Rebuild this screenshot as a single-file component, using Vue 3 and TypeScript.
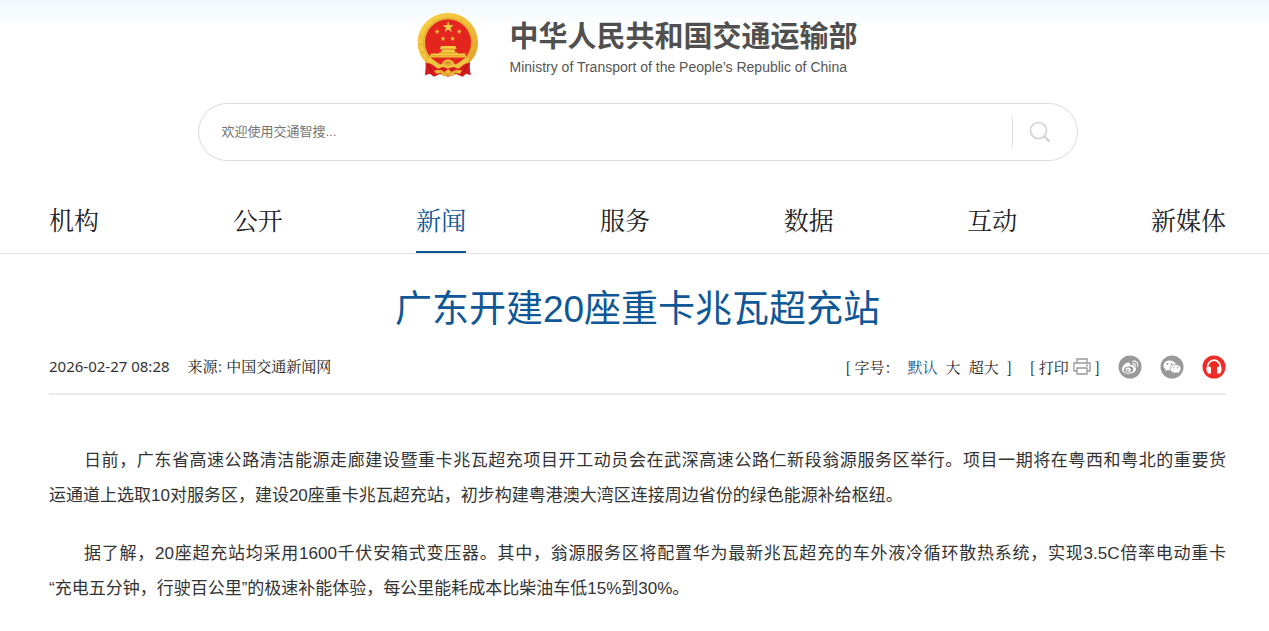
<script setup lang="ts">
import { ref } from 'vue'

const navItems: string[] = ['机构', '公开', '新闻', '服务', '数据', '互动', '新媒体']
const activeNav = ref('新闻')
const sizes: string[] = ['默认', '大', '超大']
const activeSize = ref('默认')
const query = ref('')

interface Paragraph {
  lead: string
  rest: string
}
const paragraphs: Paragraph[] = [
  {
    lead: '日前，广东省高速公路清洁能源走廊建设暨重卡兆瓦超充项目开工动员会在武深高速公路仁新段翁源服务区举行。项目一期将在粤西和粤北的重要货',
    rest: '运通道上选取10对服务区，建设20座重卡兆瓦超充站，初步构建粤港澳大湾区连接周边省份的绿色能源补给枢纽。',
  },
  {
    lead: '据了解，20座超充站均采用1600千伏安箱式变压器。其中，翁源服务区将配置华为最新兆瓦超充的车外液冷循环散热系统，实现3.5C倍率电动重卡',
    rest: '“充电五分钟，行驶百公里”的极速补能体验，每公里能耗成本比柴油车低15%到30%。',
  },
]
</script>

<template>
  <div class="page" lang="zh-CN">
    <header class="header">
      <a class="brand" href="#">
        <svg class="emblem" viewBox="21 21 188 198" aria-hidden="true">
          <defs>
            <linearGradient id="gold" x1="0" y1="0" x2="1" y2="1">
              <stop offset="0" stop-color="#f8d044" />
              <stop offset=".5" stop-color="#f3c13c" />
              <stop offset="1" stop-color="#dfa02c" />
            </linearGradient>
          </defs>
          <path d="M45 158C49 177 47 195 45 212L60 207L72 216L91 208L115 216L139 208L159 216L170 207L184 212C181 195 179 176 184 158Z" fill="#d71920" />
          <path d="M115 23C64 23 23 63 23 113C23 139 34 162 53 176L72 171L89 187L141 187L157 171L176 176C195 162 206 139 206 113C206 63 166 23 115 23Z" fill="url(#gold)" />
          <circle cx="115" cy="112" r="74" fill="none" stroke="#dda52d" stroke-width="3" />
          <path d="M31 91L40 97M28 116L38 120M34 144L44 142M46 62L54 71M70 42L75 52M158 40L154 51M184 64L176 72M199 91L190 96M202 118L192 120M195 144L186 142" stroke="#d5982a" stroke-width="2" />
          <circle cx="115" cy="112" r="70" fill="#e4251e" />
          <path d="M115.500 48L119.500 60H133L122.500 68L126.500 81L115.500 73L105 81L109 68L98 60H111.500Z" fill="#efcf4a" />
          <path id="star" d="M82 71L84 77H90L85 81L87 87L82 83L77 87L79 81L74 77H80Z" fill="#ebbe3d" />
          <use href="#star" x="67" />
          <use href="#star" x="18" y="21" />
          <use href="#star" x="47" y="21" />
          <path d="M94 123H137L141 132H90ZM95 133H136V143H95ZM63 146H167L171 158H59ZM89 142H142L145 147H86Z" fill="#f6cd40" />
          <path d="M61 153H169M96 132H136M92 144H139" stroke="#cf8424" stroke-width="2" />
          <path d="M49 158C70 158 79 175 94 181L103 168L115 163L128 168L137 181C153 174 160 158 181 158L175 174C164 176 155 187 146 192L132 186L115 191L99 186L85 192C76 187 66 176 54 174Z" fill="#f4c540" stroke="#dca02c" />
          <path d="M101 180C100 170 107 168 115 168S130 170 129 180L115 187Z" fill="#e8b236" />
          <path d="M105 177Q115 167 125 177M111 180L115 171L120 180" fill="none" stroke="#bd7922" stroke-width="2" />
          <path d="M72 197L92 195L105 202L115 193L126 202L139 195L158 197L151 207L137 205L133 213H98L93 205L80 207Z" fill="#edb938" />
          <path d="M99 200L115 210L132 200M88 197L99 207M143 197L132 207" fill="none" stroke="#ca8125" stroke-width="2" />
          <path d="M53 176L66 202M176 176L164 202" stroke="#ac1718" stroke-width="4" />
        </svg>
        <span class="brand-text">
          <span class="brand-cn">中华人民共和国交通运输部</span>
          <span class="brand-en" lang="en">Ministry of Transport of the People’s Republic of China</span>
        </span>
      </a>
      <form class="search" role="search" @submit.prevent>
        <input v-model="query" type="text" placeholder="欢迎使用交通智搜..." aria-label="欢迎使用交通智搜" />
        <button type="submit" aria-label="搜索">
          <svg viewBox="0 0 22 22" width="22" height="22" fill="none" stroke="#cfcfcf" stroke-width="1.500">
            <circle cx="9.500" cy="9.500" r="8" />
            <path d="M15 15L20.500 20.500" stroke-width="2" />
          </svg>
        </button>
      </form>
    </header>

    <nav class="nav">
      <a v-for="item in navItems" :key="item" href="#" :class="{ active: item === activeNav }" @click.prevent="activeNav = item">{{ item }}</a>
    </nav>

    <main class="article">
      <h1>广东开建20座重卡兆瓦超充站</h1>
      <div class="meta">
        <span class="date">2026-02-27 08:28</span>
        <span class="source">来源: 中国交通新闻网</span>
        <div class="tools">
          <span class="label">[ 字号：</span>
          <span class="sizes">
            <button v-for="s in sizes" :key="s" type="button" :class="{ chosen: s === activeSize }" @click="activeSize = s">{{ s }}</button>
            <span>]</span>
          </span>
          <button class="print" type="button">
            <span>[ 打印</span>
            <svg viewBox="0 0 20 20" width="20" height="20" fill="none" stroke="#999" stroke-width="1.300">
              <path d="M5 6V2H15V6M5 14H2V6H18V14H15M5 11H15V17H5Z" />
              <path d="M14 8.500H16" />
            </svg>
            <span>]</span>
          </button>
          <span class="share">
            <a href="#" aria-label="微博">
              <svg viewBox="0 0 24 24" width="24" height="24">
                <circle cx="12" cy="12" r="11.500" fill="#999" />
                <path d="M10 7.500C7.500 7.800 4 11.300 4 14.200C4 17 7.200 18.800 10.800 18.800C15 18.800 18 16.500 18 14.100C18 12.600 16.900 11.900 15.800 11.600C16.300 10 15 9.100 11.800 10.300C12.400 8.400 11.600 7.300 10 7.500Z" fill="#fff" />
                <ellipse cx="10.600" cy="14.600" rx="4.700" ry="3.200" transform="rotate(-8 10.600 14.600)" fill="#999" />
                <ellipse cx="10.200" cy="14.700" rx="2.600" ry="2.200" fill="#fff" />
                <circle cx="9.700" cy="15" r="1.100" fill="#999" />
                <path d="M14.800 8.600C16.700 8.400 17.700 9.600 17.300 11.200M14.700 6.200C18.200 5.600 20.600 8.200 19.700 11.500" fill="none" stroke="#fff" stroke-width="1.100" stroke-linecap="round" />
              </svg>
            </a>
            <a href="#" aria-label="微信">
              <svg viewBox="0 0 24 24" width="24" height="24">
                <circle cx="12" cy="12" r="11.500" fill="#999" />
                <path d="M9.700 5.500C6.200 5.500 3.500 7.700 3.500 10.400C3.500 12 4.300 13.300 5.700 14.200L5.100 16L7.500 14.900C8.900 15.300 10.200 15.300 11.400 15C14 14.600 16 12.600 16 10.300C16 7.700 13.200 5.500 9.700 5.500Z" fill="#fff" />
                <path d="M15.700 9.600C12.500 9.600 10.200 11.500 10.200 13.900S12.600 18.100 15.700 18.100C16.400 18.100 17 18 17.600 17.800L19.600 18.700L19.100 17C20.300 16.200 21 15.100 21 13.800C21 11.500 18.700 9.600 15.700 9.600Z" fill="#fff" stroke="#999" stroke-width=".8" />
                <g fill="#999"><circle cx="7.500" cy="9" r=".9" /><circle cx="11.700" cy="9" r=".9" /><circle cx="13.800" cy="12.700" r=".8" /><circle cx="17.600" cy="12.700" r=".8" /></g>
              </svg>
            </a>
            <a href="#" aria-label="收听">
              <svg viewBox="0 0 24 24" width="24" height="24">
                <circle cx="12" cy="12" r="11.500" fill="#ee2b24" />
                <path d="M5.700 13V11.500A6.300 6.300 0 0 1 18.300 11.500V13" fill="none" stroke="#fff" stroke-width="1.700" />
                <path d="M4.500 12.500Q6 11.300 8 11.800L9 12.500V18.300Q7 19.300 5.500 18Q3.700 15.500 4.500 12.500ZM19.500 12.500Q18 11.300 16 11.800L15 12.500V18.300Q17 19.300 18.500 18Q20.300 15.500 19.500 12.500Z" fill="#fff" />
              </svg>
            </a>
          </span>
        </div>
      </div>
      <div class="body">
        <p v-for="p in paragraphs" :key="p.lead"><span class="full">{{ p.lead }}</span><span class="rest">{{ p.rest }}</span></p>
      </div>
    </main>
  </div>
</template>

<style>
body {
  margin: 0;
  background: #fff;
}
</style>

<style scoped>
.page {
  font-family: "Liberation Sans", "Noto Sans CJK SC", sans-serif;
  color: #333;
  overflow: hidden;
}
a {
  color: inherit;
  text-decoration: none;
}
button {
  border: 0;
  padding: 0;
  background: none;
  font: inherit;
  color: inherit;
  cursor: pointer;
}
svg {
  display: block;
}
.header {
  display: flex;
  flex-direction: column;
  align-items: center;
  padding: 12px 43px 0 49px;
  background: linear-gradient(#f0f7fd, #fff 28px);
}
.brand {
  display: flex;
  align-items: flex-start;
  gap: 30px;
}
.emblem {
  width: 62px;
  height: 66px;
}
.brand-text {
  display: flex;
  flex-direction: column;
}
.brand-cn {
  font-family: "Noto Sans CJK SC", sans-serif;
  font-size: 29px;
  line-height: 44px;
  font-weight: 700;
  color: #505050;
}
.brand-en {
  font-size: 14px;
  line-height: 22px;
  color: #555;
}
.search {
  display: flex;
  align-items: center;
  box-sizing: border-box;
  width: 100%;
  max-width: 880px;
  height: 58px;
  margin-top: 25px;
  border: 1px solid #dcdcdc;
  border-radius: 29px;
  background: #fff;
}
.search input {
  flex: 1;
  min-width: 0;
  height: 40px;
  padding: 0 23px 2px;
  border: 0;
  outline: 0;
  background: transparent;
  font: 13px "Liberation Sans", "Noto Sans CJK SC", sans-serif;
  color: #333;
}
.search input::placeholder {
  color: #757575;
  opacity: 1;
}
.search button {
  display: flex;
  width: 65px;
  height: 30px;
  padding-left: 16px;
  align-items: center;
  border-left: 1px solid #dcdcdc;
}
.nav {
  display: flex;
  justify-content: space-between;
  margin-top: 26px;
  padding: 0 43px 0 49px;
  border-bottom: 1px solid #e3e3e3;
  font-family: "Noto Serif CJK SC", "Source Han Serif SC", "Noto Sans CJK SC", serif;
  font-size: 25px;
  line-height: 64px;
  color: #222;
}
.nav a {
  border-bottom: 2px solid transparent;
  white-space: nowrap;
}
.nav .active {
  color: #0f5796;
  border-bottom-color: #0f5796;
}
.article {
  padding: 0 43px 0 49px;
}
h1 {
  margin: 28px 0 0;
  font-size: 37px;
  line-height: 56px;
  font-weight: 400;
  text-align: center;
  color: #0f5796;
}
.meta {
  display: flex;
  align-items: center;
  height: 55px;
  border-bottom: 2px solid #ebebeb;
  font-family: "Noto Serif CJK SC", "Source Han Serif SC", "Noto Sans CJK SC", serif;
  font-size: 15px;
  line-height: 24px;
  color: #222;
  white-space: nowrap;
}
.date {
  font-family: "Noto Sans", sans-serif;
  color: #333;
}
.source {
  margin-left: 18px;
}
.tools {
  display: flex;
  align-items: center;
  margin-left: auto;
  padding-top: 2px;
}
.sizes {
  display: flex;
  gap: 8px;
  margin-left: 8px;
}
.chosen {
  color: #0f5796;
}
.print {
  display: flex;
  align-items: center;
  gap: 3px;
  margin-left: 18px;
}
.share {
  display: flex;
  gap: 18px;
  margin-left: 18px;
}
.body {
  padding-top: 48px;
  font-size: 17px;
  line-height: 35px;
}
.body p {
  margin: 0 0 23px;
}
.full {
  display: block;
  padding-left: 35px;
  text-align: justify;
  text-align-last: justify;
}
.rest {
  display: block;
}
</style>
